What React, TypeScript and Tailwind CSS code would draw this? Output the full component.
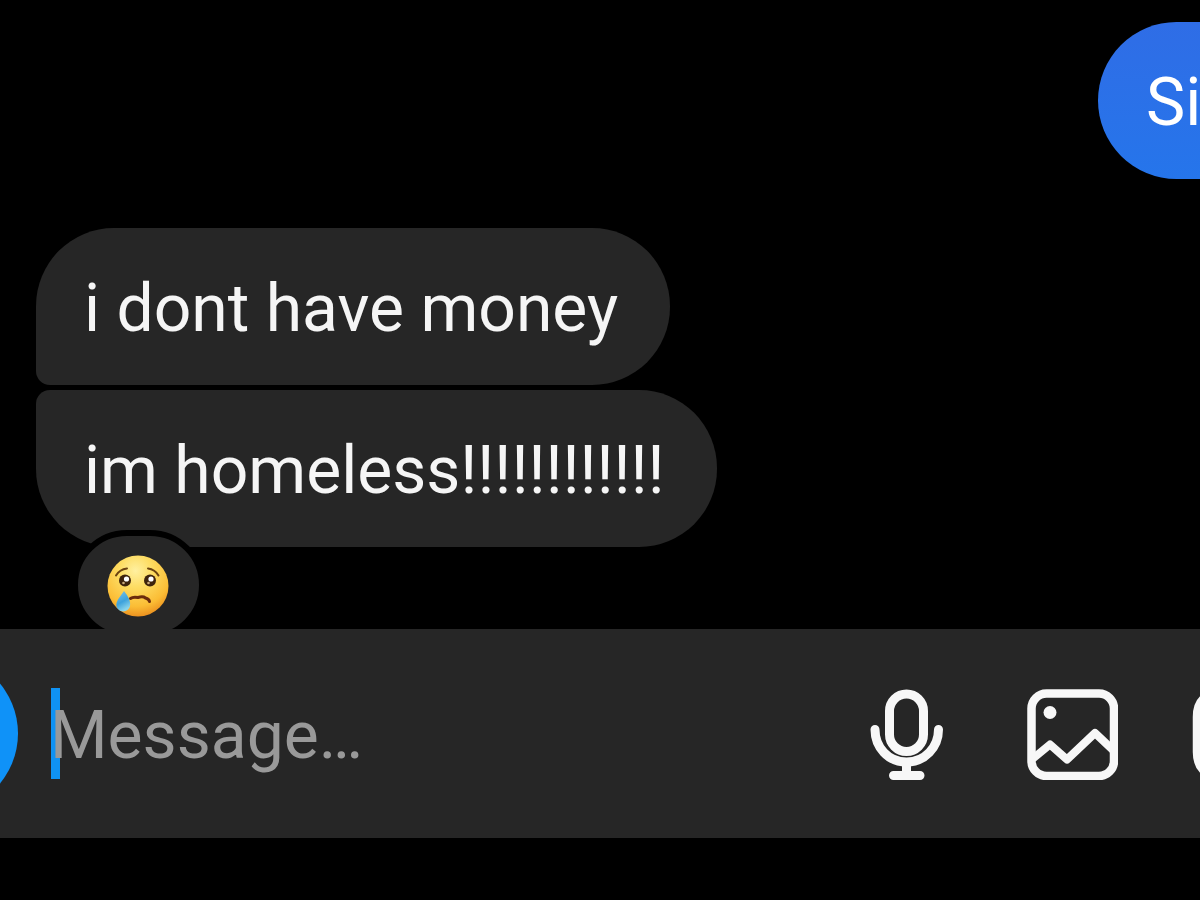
import React from "react";

function CryingFace() {
  return (
    <svg viewBox="0 0 64 64" className="size-16" role="img" aria-label="Crying face">
      <defs>
        <radialGradient id="face" cx="0.46" cy="0.25" r="0.78">
          <stop offset="0" stopColor="#fff0a0" />
          <stop offset="0.35" stopColor="#fddc62" />
          <stop offset="0.75" stopColor="#fbbd35" />
          <stop offset="1" stopColor="#e98a1c" />
        </radialGradient>
        <linearGradient id="tear" x1="0" y1="0" x2="0.4" y2="1">
          <stop offset="0" stopColor="#7cc4ea" />
          <stop offset="0.6" stopColor="#3da2dc" />
          <stop offset="1" stopColor="#8ad4ea" />
        </linearGradient>
      </defs>
      <circle cx="32" cy="32" r="30.5" fill="url(#face)" />
      <path d="M10 21.500Q13.500 15.500 21 14.500" fill="none" stroke="#6b4310" strokeWidth="2" strokeLinecap="round" />
      <path d="M42 14.500Q49 15.500 52.500 21.500" fill="none" stroke="#6b4310" strokeWidth="2" strokeLinecap="round" />
      <circle cx="19" cy="26.500" r="6" fill="#3d230c" />
      <circle cx="44" cy="26.500" r="6" fill="#3d230c" />
      <circle cx="20.500" cy="25" r="2.600" fill="#fff" />
      <circle cx="45" cy="25" r="2.600" fill="#fff" />
      <circle cx="17.500" cy="29" r="1.300" fill="#c9a878" />
      <circle cx="42.500" cy="29" r="1.300" fill="#c9a878" />
      <path d="M24.500 44.500Q27 42.500 32 43.500Q37 42 39.500 44Q43 45 43.500 47.500" fill="none" stroke="#6b2b0c" strokeWidth="3" strokeLinecap="round" strokeLinejoin="round" />
      <path d="M18 37C22 42 25 47 24 52C23 57 17 59 13 56C9 53 10 48 13 44Z" fill="url(#tear)" />
    </svg>
  );
}

function MicIcon() {
  return (
    <svg viewBox="0 0 92 92" className="size-[92px]" fill="none" stroke="#f7f7f7" strokeWidth="9" strokeLinecap="round" aria-hidden="true">
      <rect x="29.500" y="6" width="34" height="57.500" rx="17" />
      <path d="M15 41.500C15 59 28 74 46.500 74S78.500 59 78.500 41.500" />
      <path d="M46.500 75V87M33.500 87.500H60" />
    </svg>
  );
}

function PictureIcon() {
  return (
    <svg viewBox="0 0 92 92" className="size-[92px]" fill="none" stroke="#f7f7f7" strokeWidth="8.500" strokeLinejoin="round" aria-hidden="true">
      <rect x="5.500" y="5.500" width="82.500" height="82.500" rx="15" />
      <path d="M7 70.500L24 56.500L41 71.500L69 45L87 62" strokeWidth="8" />
      <circle cx="24" cy="24.500" r="6.500" fill="#f7f7f7" stroke="none" />
    </svg>
  );
}

function StickerIcon() {
  return (
    <svg viewBox="0 0 92 92" className="size-[92px]" fill="none" stroke="#f7f7f7" strokeWidth="8.500" strokeLinejoin="round" aria-hidden="true">
      <path d="M29 5.500H65Q87 5.500 87 28V57L57 87.500H29Q5 87.500 5 64V29Q5 5.500 29 5.500Z" />
      <path d="M87 57H71Q57 57 57 71V87" />
    </svg>
  );
}

export default function App() {
  return (
    <div className="flex min-h-screen flex-col overflow-hidden bg-black font-['Roboto','Liberation_Sans',sans-serif] text-[66px] leading-[77px] text-[#f5f5f5]">
      <main className="flex flex-col pt-[22px] pb-[82px] pl-9">
        <div className="-mr-[110px] w-[212px] self-end rounded-full bg-linear-to-b from-[#2f6de6] to-[#2575eb] px-12 pt-[42px] pb-[38px] text-white">
          Si
        </div>
        <div className="mt-[49px] flex flex-col items-start gap-[5px]">
          <div className="rounded-[78px] rounded-bl-[14px] bg-[#262626] pt-[42px] pr-[52px] pb-[38px] pl-12 whitespace-nowrap">
            i dont have money
          </div>
          <div className="relative rounded-[78px] rounded-tl-[14px] bg-[#262626] pt-[42px] pr-[52px] pb-[38px] pl-12 whitespace-nowrap">
            im homeless!!!!!!!!!!!!
            <button
              type="button"
              aria-label="Reactions"
              className="absolute -bottom-[93px] left-9 flex h-[110px] w-[133px] items-center justify-center rounded-full border-6 border-black bg-[#262626] pt-0.5 pr-0.5"
            >
              <CryingFace />
            </button>
          </div>
        </div>
      </main>
      <form className="relative z-10 flex items-center overflow-hidden bg-[#262626] py-[26px]">
        <button type="button" aria-label="Camera" className="-ml-[139px] size-[157px] shrink-0 rounded-full bg-[#0f92f8]" />
        <div className="relative ml-8 flex min-w-0 flex-1 items-center">
          <span className="absolute left-px h-[91px] w-[9px] bg-[#0f92f3]" />
          <input
            type="text"
            aria-label="Message"
            placeholder="Message…"
            className="relative w-full min-w-0 bg-transparent pt-1 outline-none placeholder:text-[#999999] placeholder:opacity-100"
          />
        </div>
        <div className="-mr-[84px] flex shrink-0 gap-[74px]">
          <button type="button" aria-label="Voice message"><MicIcon /></button>
          <button type="button" aria-label="Photos"><PictureIcon /></button>
          <button type="button" aria-label="Stickers"><StickerIcon /></button>
        </div>
      </form>
    </div>
  );
}
